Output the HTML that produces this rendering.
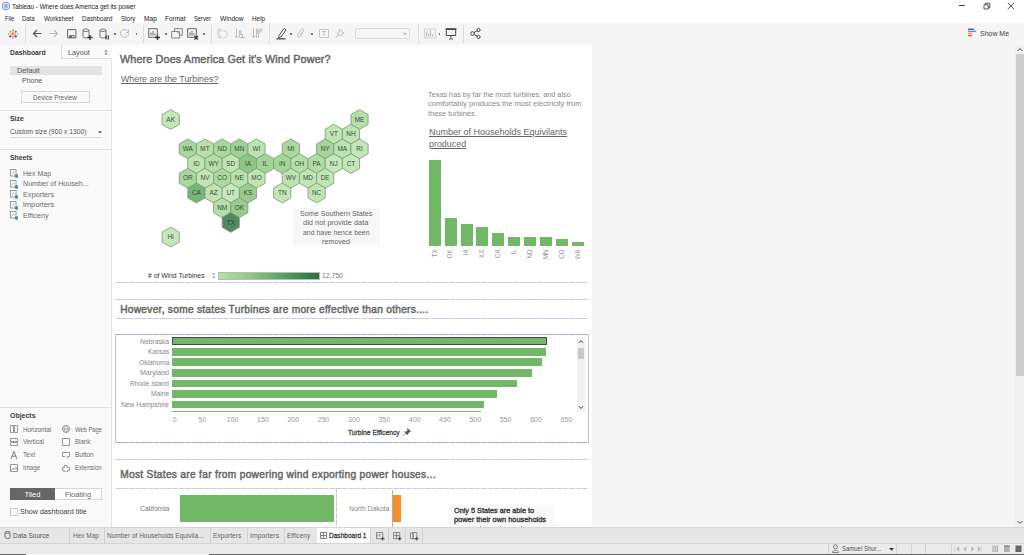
<!DOCTYPE html><html><head><meta charset="utf-8"><style>
*{margin:0;padding:0;box-sizing:border-box}
html,body{width:1024px;height:555px;overflow:hidden;background:#f5f5f5;font-family:"Liberation Sans",sans-serif;color:#333}
.a{position:absolute;white-space:nowrap}
.t{position:absolute;white-space:nowrap;line-height:1}
.dl{position:absolute;height:1px;background-image:linear-gradient(to right,#c0cce0 0,#c0cce0 5px,transparent 5px);background-size:6.3px 1px}
.dv{position:absolute;width:1px;background-image:linear-gradient(to bottom,#c0cce0 0,#c0cce0 5px,transparent 4.6px);background-size:1px 6.35px}
</style></head><body><div class="a" style="left:0px;top:0px;width:1024px;height:23px;background:#fff;"></div>
<svg class="a" style="left:1px;top:1px" width="10" height="10" viewBox="0 0 10 10"><circle cx="5" cy="5" r="3.8" fill="none" stroke="#5b8fd0" stroke-width="0.9"/><path d="M5 2v6M2 5h6M2.9 2.9l4.2 4.2M7.1 2.9l-4.2 4.2" stroke="#5b8fd0" stroke-width="0.7"/></svg>
<div class="t" style="left:12.30px;top:2.80px;font-size:7.5px;color:#222;transform:scaleX(0.840);transform-origin:0 0;">Tableau - Where does America get its power</div>
<div class="t" style="left:4.60px;top:14.80px;font-size:7.5px;color:#222;transform:scaleX(0.753);transform-origin:0 0;">File</div>
<div class="t" style="left:22.40px;top:14.80px;font-size:7.5px;color:#222;transform:scaleX(0.795);transform-origin:0 0;">Data</div>
<div class="t" style="left:43.80px;top:14.80px;font-size:7.5px;color:#222;transform:scaleX(0.826);transform-origin:0 0;">Worksheet</div>
<div class="t" style="left:82.00px;top:14.80px;font-size:7.5px;color:#222;transform:scaleX(0.829);transform-origin:0 0;">Dashboard</div>
<div class="t" style="left:120.90px;top:14.80px;font-size:7.5px;color:#222;transform:scaleX(0.811);transform-origin:0 0;">Story</div>
<div class="t" style="left:143.80px;top:14.80px;font-size:7.5px;color:#222;transform:scaleX(0.884);transform-origin:0 0;">Map</div>
<div class="t" style="left:165.20px;top:14.80px;font-size:7.5px;color:#222;transform:scaleX(0.863);transform-origin:0 0;">Format</div>
<div class="t" style="left:194.10px;top:14.80px;font-size:7.5px;color:#222;transform:scaleX(0.770);transform-origin:0 0;">Server</div>
<div class="t" style="left:219.60px;top:14.80px;font-size:7.5px;color:#222;transform:scaleX(0.881);transform-origin:0 0;">Window</div>
<div class="t" style="left:251.60px;top:14.80px;font-size:7.5px;color:#222;transform:scaleX(0.849);transform-origin:0 0;">Help</div>
<div class="a" style="left:959px;top:5px;width:6px;height:1px;background:#444;"></div>
<svg class="a" style="left:982.5px;top:2px" width="8" height="8" viewBox="0 0 8 8"><path d="M1 2.8h4.2v4.2h-4.2z M2.2 2.8v-1.6h4.6v4.6h-1.6" fill="none" stroke="#444" stroke-width="0.9"/></svg>
<svg class="a" style="left:1007px;top:2px" width="8" height="8" viewBox="0 0 8 8"><path d="M0.8 0.8l6.4 6.4M7.2 0.8l-6.4 6.4" stroke="#444" stroke-width="0.9"/></svg>
<div class="a" style="left:0px;top:23px;width:1024px;height:22px;background:#f5f5f5;"></div>
<div class="a" style="left:0px;top:45px;width:112px;height:482px;background:#fafafa;border-right:1px solid #e4e4e4"></div>
<div class="a" style="left:61px;top:45px;width:51px;height:14px;background:#fafafa;border-left:1px solid #dedede;border-bottom:1px solid #dedede"></div>
<div class="t" style="left:9.70px;top:48.75px;font-size:8px;color:#3a3a3a;font-weight:bold;transform:scaleX(0.854);transform-origin:0 0;">Dashboard</div>
<div class="t" style="left:67.70px;top:48.55px;font-size:8px;color:#555;transform:scaleX(0.908);transform-origin:0 0;">Layout</div>
<svg class="a" style="left:103.5px;top:49px" width="4" height="7" viewBox="0 0 4 7"><path d="M0.5 2.8L2 1L3.5 2.8zM0.5 4.2L2 6L3.5 4.2z" fill="#666"/></svg>
<div class="a" style="left:10px;top:66px;width:92px;height:9px;background:#e3e3e3;"></div>
<div class="t" style="left:16.60px;top:66.50px;font-size:7.5px;color:#555;transform:scaleX(0.955);transform-origin:0 0;">Default</div>
<div class="t" style="left:21.80px;top:76.90px;font-size:7.5px;color:#555;transform:scaleX(0.931);transform-origin:0 0;">Phone</div>
<div class="a" style="left:21px;top:91px;width:69px;height:12px;background:#fafafa;border:1px solid #d6d6d6"></div>
<div class="t" style="left:33.20px;top:93.65px;font-size:7px;color:#666;transform:scaleX(0.910);transform-origin:0 0;">Device Preview</div>
<div class="a" style="left:0px;top:110px;width:111px;height:1px;background:#e2e2e2;"></div>
<div class="t" style="left:9.70px;top:115.15px;font-size:8px;color:#3a3a3a;font-weight:bold;transform:scaleX(0.856);transform-origin:0 0;">Size</div>
<div class="t" style="left:9.70px;top:127.70px;font-size:7.5px;color:#555;transform:scaleX(0.894);transform-origin:0 0;">Custom size (900 x 1300)</div>
<svg class="a" style="left:98px;top:130.5px" width="4" height="3" viewBox="0 0 4 3"><path d="M0 0.3h4L2 2.6z" fill="#555"/></svg>
<div class="a" style="left:10px;top:137px;width:92px;height:1px;background:#dcdcdc;"></div>
<div class="a" style="left:0px;top:149px;width:111px;height:1px;background:#e2e2e2;"></div>
<div class="t" style="left:10.00px;top:154.15px;font-size:8px;color:#3a3a3a;font-weight:bold;transform:scaleX(0.854);transform-origin:0 0;">Sheets</div>
<svg class="a" style="left:10px;top:169.10px" width="8" height="9" viewBox="0 0 8 9"><rect x="0.5" y="0.5" width="5.5" height="6.5" fill="#fff" stroke="#888" stroke-width="0.8"/><path d="M2 5.5l1.5-3 1 2" stroke="#999" stroke-width="0.6" fill="none"/><circle cx="6.6" cy="7" r="1.9" fill="#4a8fb5"/></svg>
<div class="t" style="left:22.70px;top:169.80px;font-size:7.5px;color:#6a6a6a;transform:scaleX(0.936);transform-origin:0 0;">Hex Map</div>
<svg class="a" style="left:10px;top:179.65px" width="8" height="9" viewBox="0 0 8 9"><rect x="0.5" y="0.5" width="5.5" height="6.5" fill="#fff" stroke="#888" stroke-width="0.8"/><path d="M2 5.5l1.5-3 1 2" stroke="#999" stroke-width="0.6" fill="none"/><circle cx="6.6" cy="7" r="1.9" fill="#4a8fb5"/></svg>
<div class="t" style="left:22.70px;top:180.35px;font-size:7.5px;color:#6a6a6a;transform:scaleX(0.949);transform-origin:0 0;">Number of Househ...</div>
<svg class="a" style="left:10px;top:190.20px" width="8" height="9" viewBox="0 0 8 9"><rect x="0.5" y="0.5" width="5.5" height="6.5" fill="#fff" stroke="#888" stroke-width="0.8"/><path d="M2 5.5l1.5-3 1 2" stroke="#999" stroke-width="0.6" fill="none"/><circle cx="6.6" cy="7" r="1.9" fill="#4a8fb5"/></svg>
<div class="t" style="left:22.70px;top:190.90px;font-size:7.5px;color:#6a6a6a;transform:scaleX(0.969);transform-origin:0 0;">Exporters</div>
<svg class="a" style="left:10px;top:200.75px" width="8" height="9" viewBox="0 0 8 9"><rect x="0.5" y="0.5" width="5.5" height="6.5" fill="#fff" stroke="#888" stroke-width="0.8"/><path d="M2 5.5l1.5-3 1 2" stroke="#999" stroke-width="0.6" fill="none"/><circle cx="6.6" cy="7" r="1.9" fill="#4a8fb5"/></svg>
<div class="t" style="left:22.70px;top:201.45px;font-size:7.5px;color:#6a6a6a;">Importers</div>
<svg class="a" style="left:10px;top:211.30px" width="8" height="9" viewBox="0 0 8 9"><rect x="0.5" y="0.5" width="5.5" height="6.5" fill="#fff" stroke="#888" stroke-width="0.8"/><path d="M2 5.5l1.5-3 1 2" stroke="#999" stroke-width="0.6" fill="none"/><circle cx="6.6" cy="7" r="1.9" fill="#4a8fb5"/></svg>
<div class="t" style="left:22.70px;top:212.00px;font-size:7.5px;color:#6a6a6a;transform:scaleX(0.961);transform-origin:0 0;">Efficeny</div>
<div class="a" style="left:0px;top:407px;width:111px;height:1px;background:#e2e2e2;"></div>
<div class="t" style="left:9.60px;top:412.25px;font-size:8px;color:#3a3a3a;font-weight:bold;transform:scaleX(0.869);transform-origin:0 0;">Objects</div>
<svg class="a" style="left:10px;top:425.30px" width="8" height="8.5" viewBox="0 0 8 8.5"><path d="M0.5 0.5h3v7h-3zM4.5 0.5h3v7h-3z" fill="none" stroke="#808080" stroke-width="0.8"/></svg>
<div class="t" style="left:22.70px;top:425.50px;font-size:7.5px;color:#6a6a6a;transform:scaleX(0.832);transform-origin:0 0;">Horizontal</div>
<svg class="a" style="left:62px;top:425.30px" width="8" height="8.5" viewBox="0 0 8 8.5"><circle cx="4" cy="4" r="3.5" fill="none" stroke="#808080" stroke-width="0.8"/><path d="M0.5 4h7M4 0.5c-2 2-2 5 0 7M4 0.5c2 2 2 5 0 7" fill="none" stroke="#808080" stroke-width="0.6"/></svg>
<div class="t" style="left:75.00px;top:425.50px;font-size:7.5px;color:#6a6a6a;transform:scaleX(0.771);transform-origin:0 0;">Web Page</div>
<svg class="a" style="left:10px;top:438.20px" width="8" height="8.5" viewBox="0 0 8 8.5"><path d="M0.5 0.5h7v3h-7zM0.5 4.5h7v3h-7z" fill="none" stroke="#808080" stroke-width="0.8"/></svg>
<div class="t" style="left:22.70px;top:438.40px;font-size:7.5px;color:#6a6a6a;transform:scaleX(0.850);transform-origin:0 0;">Vertical</div>
<svg class="a" style="left:62px;top:438.20px" width="8" height="8.5" viewBox="0 0 8 8.5"><path d="M0.5 0.5h7v7h-7z" fill="none" stroke="#808080" stroke-width="0.8"/></svg>
<div class="t" style="left:75.00px;top:438.40px;font-size:7.5px;color:#6a6a6a;transform:scaleX(0.810);transform-origin:0 0;">Blank</div>
<svg class="a" style="left:10px;top:451.00px" width="8" height="8.5" viewBox="0 0 8 8.5"><path d="M1 8L4 0.5L7 8M2.2 5.2h3.6" fill="none" stroke="#707070" stroke-width="0.9"/></svg>
<div class="t" style="left:22.70px;top:451.20px;font-size:7.5px;color:#6a6a6a;transform:scaleX(0.872);transform-origin:0 0;">Text</div>
<svg class="a" style="left:62px;top:451.00px" width="8" height="8.5" viewBox="0 0 8 8.5"><path d="M0.5 1.5h7v4h-2M3 5.5h-2.5v-4" fill="none" stroke="#808080" stroke-width="0.8"/><path d="M4 4l2.5 3.5l-1 -0.2z" fill="#707070"/></svg>
<div class="t" style="left:75.00px;top:451.20px;font-size:7.5px;color:#6a6a6a;transform:scaleX(0.862);transform-origin:0 0;">Button</div>
<svg class="a" style="left:10px;top:463.60px" width="8" height="8.5" viewBox="0 0 8 8.5"><path d="M0.5 0.5h7v7h-7z M1 6.5l2-2.5 1.5 1.5 1.5-2 1.5 3" fill="none" stroke="#808080" stroke-width="0.8"/></svg>
<div class="t" style="left:22.70px;top:463.80px;font-size:7.5px;color:#6a6a6a;transform:scaleX(0.820);transform-origin:0 0;">Image</div>
<svg class="a" style="left:62px;top:463.60px" width="8" height="8.5" viewBox="0 0 8 8.5"><path d="M2 1.5h3v2h2.5v3h-2v1.5h-3.5v-2h-1.5v-2.5h2z" fill="none" stroke="#808080" stroke-width="0.8"/></svg>
<div class="t" style="left:75.00px;top:463.80px;font-size:7.5px;color:#6a6a6a;transform:scaleX(0.811);transform-origin:0 0;">Extension</div>
<div class="a" style="left:10px;top:488px;width:92px;height:12px;background:#fff;border:1px solid #d6d6d6"></div>
<div class="a" style="left:10px;top:488px;width:45px;height:12px;background:#666;"></div>
<div class="t" style="left:24.40px;top:490.70px;font-size:7.5px;color:#fff;">Tiled</div>
<div class="t" style="left:65.30px;top:490.70px;font-size:7.5px;color:#666;transform:scaleX(0.974);transform-origin:0 0;">Floating</div>
<div class="a" style="left:10px;top:508px;width:8px;height:8px;background:#fff;border:1px solid #ccc"></div>
<div class="t" style="left:20.40px;top:508.20px;font-size:7.5px;color:#444;transform:scaleX(0.954);transform-origin:0 0;">Show dashboard title</div>
<div class="a" style="left:112px;top:45px;width:480px;height:482px;background:#fff;"></div>
<svg class="a" style="left:968px;top:28px" width="9" height="10" viewBox="0 0 9 10"><rect x="0" y="0.5" width="6" height="1.5" fill="#7a5da0"/><rect x="0" y="2.6" width="8" height="1.5" fill="#5e9bd6"/><rect x="0" y="4.7" width="4" height="1.5" fill="#f0a050"/><rect x="0" y="6.8" width="4" height="1.5" fill="#e05a6a"/></svg>
<div class="t" style="left:979.90px;top:30.25px;font-size:8px;color:#444;transform:scaleX(0.870);transform-origin:0 0;">Show Me</div>
<div class="a" style="left:1015px;top:45px;width:9px;height:482px;background:#f0f0f0;"></div>
<div class="a" style="left:1016px;top:54px;width:8px;height:322px;background:#cdcdcd;"></div>
<svg class="a" style="left:1016px;top:47px" width="8" height="6" viewBox="0 0 8 6"><path d="M1.5 4L4 1.5L6.5 4" fill="none" stroke="#444" stroke-width="1"/></svg>
<svg class="a" style="left:1016px;top:519px" width="8" height="6" viewBox="0 0 8 6"><path d="M1.5 2L4 4.5L6.5 2" fill="none" stroke="#444" stroke-width="1"/></svg>
<div class="a" style="left:0px;top:527px;width:1024px;height:16px;background:#e6e6e6;border-top:1px solid #d8d8d8"></div>
<div class="a" style="left:0px;top:543px;width:1024px;height:11px;background:#ebebeb;border-top:1px solid #d5d5d5"></div>
<div class="a" style="left:0px;top:554px;width:26px;height:1px;background:#666;"></div>
<div class="a" style="left:209px;top:554px;width:815px;height:1px;background:#666;"></div>
<svg class="a" style="left:0;top:0" width="1024" height="555" viewBox="0 0 1024 555"><polygon points="170.65,109.59 162.06,114.54 162.06,124.46 170.65,129.41 179.24,124.46 179.24,114.54" fill="#c3e7b8" stroke="#84997f" stroke-width="0.85"/><polygon points="359.52,109.59 350.94,114.54 350.94,124.46 359.52,129.41 368.10,124.46 368.10,114.54" fill="#b5e0a8" stroke="#84997f" stroke-width="0.85"/><polygon points="333.76,124.29 325.18,129.24 325.18,139.16 333.76,144.11 342.35,139.16 342.35,129.24" fill="#c0e5b4" stroke="#84997f" stroke-width="0.85"/><polygon points="350.94,124.29 342.35,129.24 342.35,139.16 350.94,144.11 359.52,139.16 359.52,129.24" fill="#bde4b1" stroke="#84997f" stroke-width="0.85"/><polygon points="187.82,138.99 179.23,143.94 179.23,153.86 187.82,158.81 196.41,153.86 196.41,143.94" fill="#a6d89a" stroke="#84997f" stroke-width="0.85"/><polygon points="204.99,138.99 196.41,143.94 196.41,153.86 204.99,158.81 213.58,153.86 213.58,143.94" fill="#b5e0a8" stroke="#84997f" stroke-width="0.85"/><polygon points="222.16,138.99 213.58,143.94 213.58,153.86 222.16,158.81 230.75,153.86 230.75,143.94" fill="#a8d99b" stroke="#84997f" stroke-width="0.85"/><polygon points="239.33,138.99 230.75,143.94 230.75,153.86 239.33,158.81 247.92,153.86 247.92,143.94" fill="#9dd391" stroke="#84997f" stroke-width="0.85"/><polygon points="256.50,138.99 247.91,143.94 247.91,153.86 256.50,158.81 265.08,153.86 265.08,143.94" fill="#bce4b0" stroke="#84997f" stroke-width="0.85"/><polygon points="290.84,138.99 282.26,143.94 282.26,153.86 290.84,158.81 299.43,153.86 299.43,143.94" fill="#a9d99c" stroke="#84997f" stroke-width="0.85"/><polygon points="325.18,138.99 316.60,143.94 316.60,153.86 325.18,158.81 333.77,153.86 333.77,143.94" fill="#a2d596" stroke="#84997f" stroke-width="0.85"/><polygon points="342.35,138.99 333.77,143.94 333.77,153.86 342.35,158.81 350.94,153.86 350.94,143.94" fill="#bbe3af" stroke="#84997f" stroke-width="0.85"/><polygon points="359.52,138.99 350.94,143.94 350.94,153.86 359.52,158.81 368.10,153.86 368.10,143.94" fill="#c3e7b8" stroke="#84997f" stroke-width="0.85"/><polygon points="196.41,153.69 187.82,158.64 187.82,168.56 196.41,173.51 204.99,168.56 204.99,158.64" fill="#bde4b1" stroke="#84997f" stroke-width="0.85"/><polygon points="213.58,153.69 204.99,158.64 204.99,168.56 213.58,173.51 222.16,168.56 222.16,158.64" fill="#b3dfa6" stroke="#84997f" stroke-width="0.85"/><polygon points="230.75,153.69 222.16,158.64 222.16,168.56 230.75,173.51 239.33,168.56 239.33,158.64" fill="#bde4b1" stroke="#84997f" stroke-width="0.85"/><polygon points="247.92,153.69 239.33,158.64 239.33,168.56 247.92,173.51 256.50,168.56 256.50,158.64" fill="#8cc882" stroke="#84997f" stroke-width="0.85"/><polygon points="265.09,153.69 256.50,158.64 256.50,168.56 265.09,173.51 273.67,168.56 273.67,158.64" fill="#a0d594" stroke="#84997f" stroke-width="0.85"/><polygon points="282.25,153.69 273.67,158.64 273.67,168.56 282.25,173.51 290.84,168.56 290.84,158.64" fill="#a3d697" stroke="#84997f" stroke-width="0.85"/><polygon points="299.43,153.69 290.84,158.64 290.84,168.56 299.43,173.51 308.01,168.56 308.01,158.64" fill="#b5e0a8" stroke="#84997f" stroke-width="0.85"/><polygon points="316.60,153.69 308.01,158.64 308.01,168.56 316.60,173.51 325.18,168.56 325.18,158.64" fill="#b0dda3" stroke="#84997f" stroke-width="0.85"/><polygon points="333.76,153.69 325.18,158.64 325.18,168.56 333.76,173.51 342.35,168.56 342.35,158.64" fill="#c3e7b8" stroke="#84997f" stroke-width="0.85"/><polygon points="350.94,153.69 342.35,158.64 342.35,168.56 350.94,173.51 359.52,168.56 359.52,158.64" fill="#c3e7b8" stroke="#84997f" stroke-width="0.85"/><polygon points="187.82,168.39 179.23,173.34 179.23,183.26 187.82,188.21 196.41,183.26 196.41,173.34" fill="#a6d89a" stroke="#84997f" stroke-width="0.85"/><polygon points="204.99,168.39 196.41,173.34 196.41,183.26 204.99,188.21 213.58,183.26 213.58,173.34" fill="#c1e6b5" stroke="#84997f" stroke-width="0.85"/><polygon points="222.16,168.39 213.58,173.34 213.58,183.26 222.16,188.21 230.75,183.26 230.75,173.34" fill="#a9d99c" stroke="#84997f" stroke-width="0.85"/><polygon points="239.33,168.39 230.75,173.34 230.75,183.26 239.33,188.21 247.92,183.26 247.92,173.34" fill="#b8e2ac" stroke="#84997f" stroke-width="0.85"/><polygon points="256.50,168.39 247.91,173.34 247.91,183.26 256.50,188.21 265.08,183.26 265.08,173.34" fill="#c0e5b4" stroke="#84997f" stroke-width="0.85"/><polygon points="290.84,168.39 282.26,173.34 282.26,183.26 290.84,188.21 299.43,183.26 299.43,173.34" fill="#bce4b0" stroke="#84997f" stroke-width="0.85"/><polygon points="308.01,168.39 299.43,173.34 299.43,183.26 308.01,188.21 316.59,183.26 316.59,173.34" fill="#c1e6b5" stroke="#84997f" stroke-width="0.85"/><polygon points="325.18,168.39 316.60,173.34 316.60,183.26 325.18,188.21 333.77,183.26 333.77,173.34" fill="#c1e6b5" stroke="#84997f" stroke-width="0.85"/><polygon points="196.41,183.09 187.82,188.04 187.82,197.96 196.41,202.91 204.99,197.96 204.99,188.04" fill="#77b47a" stroke="#84997f" stroke-width="0.85"/><polygon points="213.58,183.09 204.99,188.04 204.99,197.96 213.58,202.91 222.16,197.96 222.16,188.04" fill="#bfe3b0" stroke="#84997f" stroke-width="0.85"/><polygon points="230.75,183.09 222.16,188.04 222.16,197.96 230.75,202.91 239.33,197.96 239.33,188.04" fill="#c6e9bb" stroke="#84997f" stroke-width="0.85"/><polygon points="247.92,183.09 239.33,188.04 239.33,197.96 247.92,202.91 256.50,197.96 256.50,188.04" fill="#98cc8c" stroke="#84997f" stroke-width="0.85"/><polygon points="282.25,183.09 273.67,188.04 273.67,197.96 282.25,202.91 290.84,197.96 290.84,188.04" fill="#c3e7b8" stroke="#84997f" stroke-width="0.85"/><polygon points="316.60,183.09 308.01,188.04 308.01,197.96 316.60,202.91 325.18,197.96 325.18,188.04" fill="#c0e5b4" stroke="#84997f" stroke-width="0.85"/><polygon points="222.16,197.79 213.58,202.74 213.58,212.66 222.16,217.61 230.75,212.66 230.75,202.74" fill="#b5e0a8" stroke="#84997f" stroke-width="0.85"/><polygon points="239.33,197.79 230.75,202.74 230.75,212.66 239.33,217.61 247.92,212.66 247.92,202.74" fill="#98cc8c" stroke="#84997f" stroke-width="0.85"/><polygon points="230.75,212.49 222.16,217.44 222.16,227.36 230.75,232.31 239.33,227.36 239.33,217.44" fill="#518a62" stroke="#84997f" stroke-width="0.85"/><polygon points="170.65,227.19 162.06,232.14 162.06,242.06 170.65,247.01 179.24,242.06 179.24,232.14" fill="#c6e8bb" stroke="#84997f" stroke-width="0.85"/><text x="170.65" y="121.60" font-size="7.3" text-anchor="middle" fill="#3d4a3c" font-family="Liberation Sans" textLength="8.57" lengthAdjust="spacingAndGlyphs">AK</text><text x="359.52" y="121.60" font-size="7.3" text-anchor="middle" fill="#3d4a3c" font-family="Liberation Sans" textLength="9.64" lengthAdjust="spacingAndGlyphs">ME</text><text x="333.76" y="136.30" font-size="7.3" text-anchor="middle" fill="#3d4a3c" font-family="Liberation Sans" textLength="8.21" lengthAdjust="spacingAndGlyphs">VT</text><text x="350.94" y="136.30" font-size="7.3" text-anchor="middle" fill="#3d4a3c" font-family="Liberation Sans" textLength="9.28" lengthAdjust="spacingAndGlyphs">NH</text><text x="187.82" y="151.00" font-size="7.3" text-anchor="middle" fill="#3d4a3c" font-family="Liberation Sans" textLength="10.11" lengthAdjust="spacingAndGlyphs">WA</text><text x="204.99" y="151.00" font-size="7.3" text-anchor="middle" fill="#3d4a3c" font-family="Liberation Sans" textLength="9.28" lengthAdjust="spacingAndGlyphs">MT</text><text x="222.16" y="151.00" font-size="7.3" text-anchor="middle" fill="#3d4a3c" font-family="Liberation Sans" textLength="9.28" lengthAdjust="spacingAndGlyphs">ND</text><text x="239.33" y="151.00" font-size="7.3" text-anchor="middle" fill="#3d4a3c" font-family="Liberation Sans" textLength="9.99" lengthAdjust="spacingAndGlyphs">MN</text><text x="256.50" y="151.00" font-size="7.3" text-anchor="middle" fill="#3d4a3c" font-family="Liberation Sans" textLength="7.85" lengthAdjust="spacingAndGlyphs">WI</text><text x="290.84" y="151.00" font-size="7.3" text-anchor="middle" fill="#3d4a3c" font-family="Liberation Sans" textLength="7.14" lengthAdjust="spacingAndGlyphs">MI</text><text x="325.18" y="151.00" font-size="7.3" text-anchor="middle" fill="#3d4a3c" font-family="Liberation Sans" textLength="8.92" lengthAdjust="spacingAndGlyphs">NY</text><text x="342.35" y="151.00" font-size="7.3" text-anchor="middle" fill="#3d4a3c" font-family="Liberation Sans" textLength="9.64" lengthAdjust="spacingAndGlyphs">MA</text><text x="359.52" y="151.00" font-size="7.3" text-anchor="middle" fill="#3d4a3c" font-family="Liberation Sans" textLength="6.42" lengthAdjust="spacingAndGlyphs">RI</text><text x="196.41" y="165.70" font-size="7.3" text-anchor="middle" fill="#3d4a3c" font-family="Liberation Sans" textLength="6.42" lengthAdjust="spacingAndGlyphs">ID</text><text x="213.58" y="165.70" font-size="7.3" text-anchor="middle" fill="#3d4a3c" font-family="Liberation Sans" textLength="10.35" lengthAdjust="spacingAndGlyphs">WY</text><text x="230.75" y="165.70" font-size="7.3" text-anchor="middle" fill="#3d4a3c" font-family="Liberation Sans" textLength="8.92" lengthAdjust="spacingAndGlyphs">SD</text><text x="247.92" y="165.70" font-size="7.3" text-anchor="middle" fill="#3d4a3c" font-family="Liberation Sans" textLength="6.07" lengthAdjust="spacingAndGlyphs">IA</text><text x="265.09" y="165.70" font-size="7.3" text-anchor="middle" fill="#3d4a3c" font-family="Liberation Sans" textLength="5.36" lengthAdjust="spacingAndGlyphs">IL</text><text x="282.25" y="165.70" font-size="7.3" text-anchor="middle" fill="#3d4a3c" font-family="Liberation Sans" textLength="6.42" lengthAdjust="spacingAndGlyphs">IN</text><text x="299.43" y="165.70" font-size="7.3" text-anchor="middle" fill="#3d4a3c" font-family="Liberation Sans" textLength="9.64" lengthAdjust="spacingAndGlyphs">OH</text><text x="316.60" y="165.70" font-size="7.3" text-anchor="middle" fill="#3d4a3c" font-family="Liberation Sans" textLength="8.09" lengthAdjust="spacingAndGlyphs">PA</text><text x="333.76" y="165.70" font-size="7.3" text-anchor="middle" fill="#3d4a3c" font-family="Liberation Sans" textLength="7.85" lengthAdjust="spacingAndGlyphs">NJ</text><text x="350.94" y="165.70" font-size="7.3" text-anchor="middle" fill="#3d4a3c" font-family="Liberation Sans" textLength="8.56" lengthAdjust="spacingAndGlyphs">CT</text><text x="187.82" y="180.40" font-size="7.3" text-anchor="middle" fill="#3d4a3c" font-family="Liberation Sans" textLength="9.64" lengthAdjust="spacingAndGlyphs">OR</text><text x="204.99" y="180.40" font-size="7.3" text-anchor="middle" fill="#3d4a3c" font-family="Liberation Sans" textLength="8.92" lengthAdjust="spacingAndGlyphs">NV</text><text x="222.16" y="180.40" font-size="7.3" text-anchor="middle" fill="#3d4a3c" font-family="Liberation Sans" textLength="9.64" lengthAdjust="spacingAndGlyphs">CO</text><text x="239.33" y="180.40" font-size="7.3" text-anchor="middle" fill="#3d4a3c" font-family="Liberation Sans" textLength="8.92" lengthAdjust="spacingAndGlyphs">NE</text><text x="256.50" y="180.40" font-size="7.3" text-anchor="middle" fill="#3d4a3c" font-family="Liberation Sans" textLength="10.35" lengthAdjust="spacingAndGlyphs">MO</text><text x="290.84" y="180.40" font-size="7.3" text-anchor="middle" fill="#3d4a3c" font-family="Liberation Sans" textLength="10.35" lengthAdjust="spacingAndGlyphs">WV</text><text x="308.01" y="180.40" font-size="7.3" text-anchor="middle" fill="#3d4a3c" font-family="Liberation Sans" textLength="9.99" lengthAdjust="spacingAndGlyphs">MD</text><text x="325.18" y="180.40" font-size="7.3" text-anchor="middle" fill="#3d4a3c" font-family="Liberation Sans" textLength="8.92" lengthAdjust="spacingAndGlyphs">DE</text><text x="196.41" y="195.10" font-size="7.3" text-anchor="middle" fill="#3d4a3c" font-family="Liberation Sans" textLength="8.92" lengthAdjust="spacingAndGlyphs">CA</text><text x="213.58" y="195.10" font-size="7.3" text-anchor="middle" fill="#3d4a3c" font-family="Liberation Sans" textLength="8.21" lengthAdjust="spacingAndGlyphs">AZ</text><text x="230.75" y="195.10" font-size="7.3" text-anchor="middle" fill="#3d4a3c" font-family="Liberation Sans" textLength="8.56" lengthAdjust="spacingAndGlyphs">UT</text><text x="247.92" y="195.10" font-size="7.3" text-anchor="middle" fill="#3d4a3c" font-family="Liberation Sans" textLength="8.57" lengthAdjust="spacingAndGlyphs">KS</text><text x="282.25" y="195.10" font-size="7.3" text-anchor="middle" fill="#3d4a3c" font-family="Liberation Sans" textLength="8.56" lengthAdjust="spacingAndGlyphs">TN</text><text x="316.60" y="195.10" font-size="7.3" text-anchor="middle" fill="#3d4a3c" font-family="Liberation Sans" textLength="9.28" lengthAdjust="spacingAndGlyphs">NC</text><text x="222.16" y="209.80" font-size="7.3" text-anchor="middle" fill="#3d4a3c" font-family="Liberation Sans" textLength="9.99" lengthAdjust="spacingAndGlyphs">NM</text><text x="239.33" y="209.80" font-size="7.3" text-anchor="middle" fill="#3d4a3c" font-family="Liberation Sans" textLength="9.28" lengthAdjust="spacingAndGlyphs">OK</text><text x="230.75" y="224.50" font-size="7.3" text-anchor="middle" fill="#2b3a2b" font-family="Liberation Sans" textLength="8.21" lengthAdjust="spacingAndGlyphs">TX</text><text x="170.65" y="239.20" font-size="7.3" text-anchor="middle" fill="#3d4a3c" font-family="Liberation Sans" textLength="6.42" lengthAdjust="spacingAndGlyphs">HI</text></svg>
<div class="a" style="left:25.4px;top:25px;width:1px;height:18px;background:#dcdcdc;"></div>
<div class="a" style="left:143.4px;top:25px;width:1px;height:18px;background:#dcdcdc;"></div>
<div class="a" style="left:211px;top:25px;width:1px;height:18px;background:#dcdcdc;"></div>
<div class="a" style="left:269.4px;top:25px;width:1px;height:18px;background:#dcdcdc;"></div>
<div class="a" style="left:418px;top:25px;width:1px;height:18px;background:#dcdcdc;"></div>
<div class="a" style="left:463.4px;top:25px;width:1px;height:18px;background:#dcdcdc;"></div>
<svg class="a" style="left:7.5px;top:28.6px" width="10" height="10" viewBox="0 0 13 13"><g stroke-width="1.3"><path d="M6.5 3v7M3 6.5h7" stroke="#e8762b"/><path d="M3 2v3M1.5 3.5h3" stroke="#f5a623"/><path d="M10 2v3M8.5 3.5h3" stroke="#59879b"/><path d="M3 8v3M1.5 9.5h3" stroke="#c72037"/><path d="M10 8v3M8.5 9.5h3" stroke="#1f457e"/><path d="M6.5 0.5v2M5.5 1.5h2M6.5 10.5v2M5.5 11.5h2M0.5 5.5v2M12.5 5.5v2" stroke="#7099a6"/></g></svg>
<svg class="a" style="left:32px;top:29px" width="10" height="9" viewBox="0 0 10 9"><path d="M9.5 4.5H1.5M5 1L1.5 4.5L5 8" fill="none" stroke="#555" stroke-width="1.2"/></svg>
<svg class="a" style="left:49px;top:29px" width="10" height="9" viewBox="0 0 10 9"><path d="M0.5 4.5H8.5M5 1L8.5 4.5L5 8" fill="none" stroke="#bbb" stroke-width="1.1"/></svg>
<svg class="a" style="left:67px;top:29.3px" width="9.5" height="9.5" viewBox="0 0 9.5 9.5"><path d="M0.6 0.6h8.3v8.3h-8.3z" fill="none" stroke="#666" stroke-width="1"/><path d="M2 6.2h5.5v2.7h-5.5z" fill="#666"/><rect x="5" y="7" width="1.4" height="1.4" fill="#ddd"/></svg>
<svg class="a" style="left:82px;top:28px" width="11" height="12" viewBox="0 0 11 12"><path d="M1 2.5c0-2 6-2 6 0v6.5c0 1.2-6 1.2-6 0z M1 2.5c0 1.2 6 1.2 6 0" fill="none" stroke="#666" stroke-width="0.9"/><path d="M8 7v5M5.5 9.5h5" stroke="#333" stroke-width="1.3"/></svg>
<svg class="a" style="left:99px;top:28px" width="11" height="12" viewBox="0 0 11 12"><path d="M1 2.5c0-2 6-2 6 0v6.5c0 1.2-6 1.2-6 0z M1 2.5c0 1.2 6 1.2 6 0" fill="none" stroke="#666" stroke-width="0.9"/><path d="M7 7.5v4M9.3 7.5v4" stroke="#333" stroke-width="1.2"/></svg>
<div class="a" style="left:114.25px;top:33.2px;width:1.5px;height:1.5px;background:#777;"></div>
<div class="a" style="left:135.75px;top:33.2px;width:1.5px;height:1.5px;background:#777;"></div>
<div class="a" style="left:165.05px;top:33.2px;width:1.5px;height:1.5px;background:#777;"></div>
<div class="a" style="left:203.25px;top:33.2px;width:1.5px;height:1.5px;background:#777;"></div>
<div class="a" style="left:290.05px;top:33.2px;width:1.5px;height:1.5px;background:#777;"></div>
<div class="a" style="left:311.25px;top:33.2px;width:1.5px;height:1.5px;background:#777;"></div>
<div class="a" style="left:438.65px;top:33.2px;width:1.5px;height:1.5px;background:#777;"></div>
<svg class="a" style="left:120px;top:29px" width="10" height="10" viewBox="0 0 10 10"><path d="M8.5 4.5a4 4 0 1 1-1.2-2.9M8.5 0.8v2.6h-2.6" fill="none" stroke="#bbb" stroke-width="1"/></svg>
<svg class="a" style="left:148px;top:28px" width="13" height="12" viewBox="0 0 13 12"><path d="M0.7 0.7h8.6v8.6h-8.6z" fill="none" stroke="#666" stroke-width="1"/><path d="M3 7.5v-3M5 7.5v-4.5M7 7.5v-2" stroke="#666" stroke-width="1"/><path d="M9.5 7v5M7 9.5h5" stroke="#333" stroke-width="1.4"/></svg>
<svg class="a" style="left:171px;top:28px" width="12" height="11" viewBox="0 0 12 11"><path d="M3.5 0.7h7.8v6.5h-7.8z" fill="#f5f5f5" stroke="#777" stroke-width="0.9"/><path d="M0.7 3.5h7.8v6.5h-7.8z" fill="#f5f5f5" stroke="#777" stroke-width="0.9"/><path d="M6.5 5.5l1-1.5 1 1.5" stroke="#777" fill="none" stroke-width="0.7"/></svg>
<svg class="a" style="left:187px;top:28px" width="12" height="12" viewBox="0 0 12 12"><path d="M0.7 0.7h8.6v8.6h-8.6z" fill="none" stroke="#666" stroke-width="1"/><path d="M3 7.5v-3M5 7.5v-4.5M7 7.5v-2" stroke="#666" stroke-width="1"/><path d="M7.5 8l3.5 3.5M11 8l-3.5 3.5" stroke="#333" stroke-width="1.3"/></svg>
<svg class="a" style="left:217px;top:28px" width="11" height="11" viewBox="0 0 11 11"><path d="M1 1h3v2h-2v5h2v2h-3z M6 3h2.5l1.5 2v3l-1.5 2h-2.5" fill="none" stroke="#ccc" stroke-width="0.9"/></svg>
<svg class="a" style="left:234px;top:28px" width="12" height="11" viewBox="0 0 12 11"><path d="M2.5 0.5v9M0.7 7.5l1.8 2.2 1.8-2.2" fill="none" stroke="#bbb" stroke-width="0.9"/><path d="M5.5 9.5h5.5M5.5 9.5v-3h3v3M5.5 6.5v-4h1.5v4" fill="none" stroke="#bbb" stroke-width="0.9"/></svg>
<svg class="a" style="left:251px;top:28px" width="12" height="11" viewBox="0 0 12 11"><path d="M2.5 0.5v9M0.7 7.5l1.8 2.2 1.8-2.2" fill="none" stroke="#bbb" stroke-width="0.9"/><path d="M5.5 1h5.5v2h-5.5zM5.5 3h3.5v2h-3.5zM5.5 5h2v4h-2z" fill="none" stroke="#bbb" stroke-width="0.9"/></svg>
<svg class="a" style="left:276px;top:27px" width="11" height="13" viewBox="0 0 11 13"><path d="M3 8.5l5-7 2 1.5-5 7-2.5 0.5z" fill="none" stroke="#555" stroke-width="1"/><path d="M0.5 11.8h9" stroke="#555" stroke-width="1.4"/></svg>
<svg class="a" style="left:297px;top:28px" width="9" height="11" viewBox="0 0 9 11"><path d="M6.5 3.5l-3.5 5a1.5 1.5 0 0 1-2.4-1.8l4-5.5a1.2 1.2 0 0 1 2 1.4l-3.5 4.8" fill="none" stroke="#bbb" stroke-width="0.9"/></svg>
<svg class="a" style="left:319px;top:29px" width="10" height="9" viewBox="0 0 10 9"><path d="M0.5 0.5h9v8h-9z" fill="none" stroke="#bbb" stroke-width="0.8"/><path d="M3 2.5h4M5 2.5v4.5" stroke="#bbb" stroke-width="0.9"/></svg>
<svg class="a" style="left:335px;top:28px" width="10" height="11" viewBox="0 0 10 11"><path d="M4 1l5 4-2 0.8-1.2 2.5-3.8-3 2.5-1.3z M3.2 6.5l-2.5 3.5" fill="none" stroke="#bbb" stroke-width="0.9"/></svg>
<div class="a" style="left:354.5px;top:27.8px;width:55px;height:11.7px;background:#f5f5f5;border:1px solid #dadada;border-radius:1px"></div>
<svg class="a" style="left:403px;top:33px" width="4" height="3" viewBox="0 0 4 3"><path d="M0 0h4L2 2.5z" fill="#bbb"/></svg>
<svg class="a" style="left:424px;top:28px" width="12" height="11" viewBox="0 0 12 11"><path d="M0.5 1h11v9h-11z" fill="none" stroke="#ccc" stroke-width="0.8"/><path d="M2.5 8.5v-5M4.5 8.5v-3M6.5 8.5v-6M8.5 8.5v-2" stroke="#bbb" stroke-width="1.1"/></svg>
<svg class="a" style="left:445px;top:28px" width="12" height="12" viewBox="0 0 12 12"><path d="M0.5 0.8h11" stroke="#444" stroke-width="1.3"/><path d="M1.3 1.5h9.4v6h-9.4z" fill="none" stroke="#444" stroke-width="1"/><path d="M6 7.5v3M4 11.5l2-1 2 1" fill="none" stroke="#444" stroke-width="0.9"/></svg>
<svg class="a" style="left:470px;top:28px" width="11" height="11" viewBox="0 0 11 11"><circle cx="2.5" cy="5.5" r="1.8" fill="none" stroke="#444" stroke-width="1"/><circle cx="8.5" cy="2" r="1.6" fill="none" stroke="#444" stroke-width="1"/><circle cx="8.5" cy="9" r="1.6" fill="none" stroke="#444" stroke-width="1"/><path d="M4 4.6l3-1.8M4 6.4l3 1.8" stroke="#444" stroke-width="1"/></svg>
<div class="t" style="left:120.00px;top:54.46px;font-size:10.8px;color:#666;-webkit-text-stroke:0.45px #666;letter-spacing:0.129px;">Where Does America Get it’s Wind Power?</div>
<div class="t" style="left:120.50px;top:75.10px;font-size:8.5px;color:#666;transform:scaleX(1.040);transform-origin:0 0;text-decoration:underline;">Where are the Turbines?</div>
<div class="a" style="left:293.4px;top:208px;width:86.6px;height:36.7px;background:#f7f7f7;"></div>
<div class="t" style="left:299.65px;top:210.10px;font-size:7.3px;color:#666;transform:scaleX(0.984);transform-origin:0 0;">Some Southern States</div>
<div class="t" style="left:303.05px;top:219.40px;font-size:7.3px;color:#666;transform:scaleX(1.021);transform-origin:0 0;">did not provide data</div>
<div class="t" style="left:302.50px;top:228.70px;font-size:7.3px;color:#666;transform:scaleX(0.948);transform-origin:0 0;">and have hence been</div>
<div class="t" style="left:321.80px;top:238.00px;font-size:7.3px;color:#666;transform:scaleX(0.986);transform-origin:0 0;">removed</div>
<div class="t" style="left:428.30px;top:90.85px;font-size:7.2px;color:#888;transform:scaleX(1.015);transform-origin:0 0;">Texas has by far the most turbines, and also</div>
<div class="t" style="left:428.30px;top:100.45px;font-size:7.2px;color:#888;transform:scaleX(1.047);transform-origin:0 0;">comfortably produces the most electricity from</div>
<div class="t" style="left:428.30px;top:110.05px;font-size:7.2px;color:#888;transform:scaleX(1.033);transform-origin:0 0;">these turbines.</div>
<div class="t" style="left:429.00px;top:127.84px;font-size:9px;color:#666;text-decoration:underline;">Number of Households Equivilants</div>
<div class="t" style="left:429.00px;top:139.84px;font-size:9px;color:#666;transform:scaleX(0.989);transform-origin:0 0;text-decoration:underline;">produced</div>
<div class="a" style="left:428.7px;top:159.7px;width:12px;height:86.3px;background:#72b866;"></div>
<div class="t" style="left:431.50px;top:248.60px;width:8.31px;font-size:6.5px;color:#929292;transform-origin:0 0;transform:translate(0px,8.31px) rotate(-90deg) scaleX(0.95)">TX</div>
<div class="a" style="left:444.6px;top:218.4px;width:12px;height:27.6px;background:#72b866;"></div>
<div class="t" style="left:447.40px;top:248.60px;width:9.39px;font-size:6.5px;color:#929292;transform-origin:0 0;transform:translate(0px,9.39px) rotate(-90deg) scaleX(0.95)">OK</div>
<div class="a" style="left:460.5px;top:223.7px;width:12px;height:22.3px;background:#72b866;"></div>
<div class="t" style="left:463.30px;top:248.60px;width:6.14px;font-size:6.5px;color:#929292;transform-origin:0 0;transform:translate(0px,6.14px) rotate(-90deg) scaleX(0.95)">IA</div>
<div class="a" style="left:476.4px;top:227px;width:12px;height:19px;background:#72b866;"></div>
<div class="t" style="left:479.20px;top:248.60px;width:8.67px;font-size:6.5px;color:#929292;transform-origin:0 0;transform:translate(0px,8.67px) rotate(-90deg) scaleX(0.95)">KS</div>
<div class="a" style="left:492.3px;top:232.8px;width:12px;height:13.2px;background:#72b866;"></div>
<div class="t" style="left:495.10px;top:248.60px;width:9.03px;font-size:6.5px;color:#929292;transform-origin:0 0;transform:translate(0px,9.03px) rotate(-90deg) scaleX(0.95)">CA</div>
<div class="a" style="left:508.2px;top:236.6px;width:12px;height:9.4px;background:#72b866;"></div>
<div class="t" style="left:511.00px;top:248.60px;width:5.42px;font-size:6.5px;color:#929292;transform-origin:0 0;transform:translate(0px,5.42px) rotate(-90deg) scaleX(0.95)">IL</div>
<div class="a" style="left:524.1px;top:237px;width:12px;height:9px;background:#72b866;"></div>
<div class="t" style="left:526.90px;top:248.60px;width:9.39px;font-size:6.5px;color:#929292;transform-origin:0 0;transform:translate(0px,9.39px) rotate(-90deg) scaleX(0.95)">ND</div>
<div class="a" style="left:540.0px;top:237px;width:12px;height:9px;background:#72b866;"></div>
<div class="t" style="left:542.80px;top:248.60px;width:10.11px;font-size:6.5px;color:#929292;transform-origin:0 0;transform:translate(0px,10.11px) rotate(-90deg) scaleX(0.95)">MN</div>
<div class="a" style="left:555.9px;top:239px;width:12px;height:7px;background:#72b866;"></div>
<div class="t" style="left:558.70px;top:248.60px;width:9.75px;font-size:6.5px;color:#929292;transform-origin:0 0;transform:translate(0px,9.75px) rotate(-90deg) scaleX(0.95)">CO</div>
<div class="a" style="left:571.8px;top:241.8px;width:12px;height:4.2px;background:#72b866;"></div>
<div class="t" style="left:574.60px;top:248.60px;width:10.23px;font-size:6.5px;color:#929292;transform-origin:0 0;transform:translate(0px,10.23px) rotate(-90deg) scaleX(0.95)">WA</div>
<div class="t" style="left:147.50px;top:271.70px;font-size:7.5px;color:#333;transform:scaleX(0.904);transform-origin:0 0;"># of Wind Turbines</div>
<div class="t" style="left:211.80px;top:271.70px;font-size:7.5px;color:#777;transform:scaleX(0.767);transform-origin:0 0;">1</div>
<div class="a" style="left:218px;top:271.7px;width:101.6px;height:8.1px;background:linear-gradient(to right,#b7e2a7,#8cc47e 35%,#4b9a5a 70%,#2c6e40);border:1px solid #bbb"></div>
<div class="t" style="left:322.20px;top:271.70px;font-size:7.5px;color:#777;transform:scaleX(0.907);transform-origin:0 0;">12,750</div>
<div class="dl" style="left:116px;top:282px;width:472px"></div>
<div class="dl" style="left:116px;top:299px;width:472px"></div>
<div class="dl" style="left:116px;top:318px;width:472px"></div>
<div class="dl" style="left:116px;top:459px;width:472px"></div>
<div class="dl" style="left:116px;top:488px;width:472px"></div>
<div class="t" style="left:120.20px;top:304.97px;font-size:10.2px;color:#666;-webkit-text-stroke:0.45px #666;letter-spacing:0.264px;">However, some states Turbines are more effective than others....</div>
<div class="t" style="left:120.20px;top:470.47px;font-size:10.2px;color:#666;-webkit-text-stroke:0.45px #666;letter-spacing:0.296px;">Most States are far from powering wind exporting power houses...</div>
<div class="a" style="left:115px;top:334px;width:474px;height:109px;border:1px solid #c4c4c4"></div>
<div class="dl" style="left:116px;top:334px;width:472px;background-image:linear-gradient(to right,#9fb0c8 0,#9fb0c8 5px,#e8e8e8 5px);background-size:6.3px 1px"></div>
<div class="dl" style="left:116px;top:442px;width:472px;background-image:linear-gradient(to right,#9fb0c8 0,#9fb0c8 5px,#e8e8e8 5px);background-size:6.3px 1px"></div>
<div class="a" style="left:171.9px;top:337.3px;width:374.9px;height:7.8px;background:#72b866;border:1px solid #4a4a4a;"></div>
<div class="t" style="left:140.10px;top:337.65px;font-size:7px;color:#888;transform:scaleX(0.968);transform-origin:0 0;">Nebraska</div>
<div class="a" style="left:171.9px;top:347.9px;width:373.9px;height:7.8px;background:#72b866;"></div>
<div class="t" style="left:148.00px;top:348.20px;font-size:7px;color:#888;transform:scaleX(0.904);transform-origin:0 0;">Kansas</div>
<div class="a" style="left:171.9px;top:358.4px;width:370.4px;height:7.8px;background:#72b866;"></div>
<div class="t" style="left:138.70px;top:358.75px;font-size:7px;color:#888;transform:scaleX(0.953);transform-origin:0 0;">Oklahoma</div>
<div class="a" style="left:171.9px;top:368.9px;width:360.5px;height:7.8px;background:#72b866;"></div>
<div class="t" style="left:140.10px;top:369.30px;font-size:7px;color:#888;transform:scaleX(1.007);transform-origin:0 0;">Maryland</div>
<div class="a" style="left:171.9px;top:379.5px;width:344.9px;height:7.8px;background:#72b866;"></div>
<div class="t" style="left:130.30px;top:379.85px;font-size:7px;color:#888;transform:scaleX(0.941);transform-origin:0 0;">Rhode Island</div>
<div class="a" style="left:171.9px;top:390.1px;width:324.8px;height:7.8px;background:#72b866;"></div>
<div class="t" style="left:150.80px;top:390.40px;font-size:7px;color:#888;transform:scaleX(0.960);transform-origin:0 0;">Maine</div>
<div class="a" style="left:171.9px;top:400.6px;width:311.8px;height:7.8px;background:#72b866;"></div>
<div class="t" style="left:121.30px;top:400.95px;font-size:7px;color:#888;transform:scaleX(0.960);transform-origin:0 0;">New Hampshire</div>
<div class="a" style="left:171.9px;top:410.8px;width:309px;height:1.5px;background:#72b866;"></div>
<div class="t" style="left:172.70px;top:416.25px;font-size:7px;color:#999;">0</div>
<div class="t" style="left:198.35px;top:416.25px;font-size:7px;color:#999;">50</div>
<div class="t" style="left:226.74px;top:416.25px;font-size:7px;color:#999;">100</div>
<div class="t" style="left:257.08px;top:416.25px;font-size:7px;color:#999;">150</div>
<div class="t" style="left:287.42px;top:416.25px;font-size:7px;color:#999;">200</div>
<div class="t" style="left:317.76px;top:416.25px;font-size:7px;color:#999;">250</div>
<div class="t" style="left:348.10px;top:416.25px;font-size:7px;color:#999;">300</div>
<div class="t" style="left:378.44px;top:416.25px;font-size:7px;color:#999;">350</div>
<div class="t" style="left:408.78px;top:416.25px;font-size:7px;color:#999;">400</div>
<div class="t" style="left:439.12px;top:416.25px;font-size:7px;color:#999;">450</div>
<div class="t" style="left:469.46px;top:416.25px;font-size:7px;color:#999;">500</div>
<div class="t" style="left:499.80px;top:416.25px;font-size:7px;color:#999;">550</div>
<div class="t" style="left:530.14px;top:416.25px;font-size:7px;color:#999;">600</div>
<div class="t" style="left:560.48px;top:416.25px;font-size:7px;color:#999;">650</div>
<div class="t" style="left:348.10px;top:428.87px;font-size:7.6px;color:#444;transform:scaleX(0.887);transform-origin:0 0;-webkit-text-stroke:0.3px #444;">Turbine Efficency</div>
<svg class="a" style="left:403px;top:428px" width="8" height="8" viewBox="0 0 8 8"><path d="M4.5 0.5l3 3-1.3 0.4-1.5 1.8 0.2 1.3-3.2-3.2 1.3 0.2 1.8-1.5z M2.8 5.2l-2.3 2.3" fill="#555" stroke="#555" stroke-width="0.7"/></svg>
<div class="a" style="left:576.7px;top:337.2px;width:8px;height:74.5px;background:#f0f0f0;"></div>
<div class="a" style="left:577.5px;top:347.7px;width:6.5px;height:11px;background:#c8c8c8;"></div>
<svg class="a" style="left:577.5px;top:339px" width="6" height="5" viewBox="0 0 6 5"><path d="M1 3.8L3 1.5L5 3.8" fill="none" stroke="#444" stroke-width="1"/></svg>
<svg class="a" style="left:577.5px;top:405px" width="6" height="5" viewBox="0 0 6 5"><path d="M1 1.2L3 3.5L5 1.2" fill="none" stroke="#444" stroke-width="1"/></svg>
<div class="t" style="left:139.70px;top:505.05px;font-size:7px;color:#777;transform:scaleX(0.991);transform-origin:0 0;">California</div>
<div class="a" style="left:180px;top:495.1px;width:154.2px;height:26.8px;background:#72b866;"></div>
<div class="dv" style="left:336px;top:488px;height:39px"></div>
<div class="t" style="left:348.80px;top:505.05px;font-size:7px;color:#888;transform:scaleX(0.975);transform-origin:0 0;">North Dakota</div>
<div class="a" style="left:392px;top:490.3px;width:1px;height:36.7px;background:#b0b0b0;"></div>
<div class="a" style="left:392.5px;top:495.3px;width:8.6px;height:26.5px;background:#f28e2b;"></div>
<div class="a" style="left:449.1px;top:504.8px;width:104.6px;height:22.2px;background:#f8f8f8;"></div>
<div class="t" style="left:454.00px;top:506.95px;font-size:8px;color:#404040;transform:scaleX(0.909);transform-origin:0 0;-webkit-text-stroke:0.4px #404040;">Only 5 States are able to</div>
<div class="t" style="left:454.00px;top:515.95px;font-size:8px;color:#404040;transform:scaleX(0.924);transform-origin:0 0;-webkit-text-stroke:0.4px #404040;">power their own households</div>
<div class="a" style="left:480px;top:526px;width:1px;height:1px;background:#999;"></div>
<div class="a" style="left:500px;top:526px;width:1px;height:1px;background:#999;"></div>
<div class="a" style="left:521px;top:526px;width:1px;height:1px;background:#999;"></div>
<div class="a" style="left:69.4px;top:528px;width:1px;height:15px;background:#d2d2d2;"></div>
<div class="a" style="left:103.6px;top:528px;width:1px;height:15px;background:#d2d2d2;"></div>
<div class="a" style="left:210.3px;top:528px;width:1px;height:15px;background:#d2d2d2;"></div>
<div class="a" style="left:247.3px;top:528px;width:1px;height:15px;background:#d2d2d2;"></div>
<div class="a" style="left:284.4px;top:528px;width:1px;height:15px;background:#d2d2d2;"></div>
<div class="a" style="left:316.7px;top:528px;width:1px;height:15px;background:#d2d2d2;"></div>
<div class="a" style="left:370.4px;top:528px;width:1px;height:15px;background:#d2d2d2;"></div>
<div class="a" style="left:387.5px;top:528px;width:1px;height:15px;background:#d2d2d2;"></div>
<div class="a" style="left:405.3px;top:528px;width:1px;height:15px;background:#d2d2d2;"></div>
<div class="a" style="left:422.1px;top:528px;width:1px;height:15px;background:#d2d2d2;"></div>
<div class="a" style="left:317.2px;top:528px;width:53.2px;height:15px;background:#fafafa;"></div>
<svg class="a" style="left:4px;top:531px" width="7" height="8" viewBox="0 0 7 8"><path d="M1 1.5c0-1.3 5-1.3 5 0v5c0 1.3-5 1.3-5 0z M1 1.5c0 1 5 1 5 0" fill="none" stroke="#666" stroke-width="0.9"/></svg>
<div class="t" style="left:12.90px;top:531.70px;font-size:7.5px;color:#555;transform:scaleX(0.866);transform-origin:0 0;">Data Source</div>
<div class="t" style="left:73.00px;top:531.70px;font-size:7.5px;color:#666;transform:scaleX(0.860);transform-origin:0 0;">Hex Map</div>
<div class="t" style="left:106.80px;top:531.70px;font-size:7.5px;color:#666;transform:scaleX(0.867);transform-origin:0 0;">Number of Households Equivila...</div>
<div class="t" style="left:213.40px;top:531.70px;font-size:7.5px;color:#666;transform:scaleX(0.882);transform-origin:0 0;">Exporters</div>
<div class="t" style="left:249.90px;top:531.70px;font-size:7.5px;color:#666;transform:scaleX(0.919);transform-origin:0 0;">Importers</div>
<div class="t" style="left:287.40px;top:531.70px;font-size:7.5px;color:#666;transform:scaleX(0.874);transform-origin:0 0;">Efficeny</div>
<svg class="a" style="left:320px;top:532px" width="7" height="7" viewBox="0 0 7 7"><path d="M0.5 0.5h6v6h-6zM3.5 0.5v6M0.5 3.5h6" fill="none" stroke="#666" stroke-width="0.8"/></svg>
<div class="t" style="left:329.10px;top:531.70px;font-size:7.5px;color:#444;transform:scaleX(0.873);transform-origin:0 0;-webkit-text-stroke:0.3px #444;">Dashboard 1</div>
<svg class="a" style="left:376px;top:532px" width="9" height="9" viewBox="0 0 10 10"><path d="M0.5 0.5h7v7h-7z" fill="none" stroke="#666" stroke-width="0.8"/><path d="M2 5v-2M4 5v-3" stroke="#666" stroke-width="0.8"/><path d="M7.5 5.5v4M5.5 7.5h4" stroke="#444" stroke-width="1.1"/></svg>
<svg class="a" style="left:393px;top:532px" width="9" height="9" viewBox="0 0 10 10"><path d="M0.5 0.5h7v7h-7zM4 0.5v7M0.5 4h7" fill="none" stroke="#666" stroke-width="0.8"/><path d="M7.5 5.5v4M5.5 7.5h4" stroke="#444" stroke-width="1.1"/></svg>
<svg class="a" style="left:410px;top:532px" width="9" height="9" viewBox="0 0 10 10"><path d="M0.5 1h3v6.5h-3zM3.5 0.5h4v7h-4z" fill="none" stroke="#666" stroke-width="0.8"/><path d="M7.5 5.5v4M5.5 7.5h4" stroke="#444" stroke-width="1.1"/></svg>
<div class="a" style="left:828.4px;top:544px;width:1px;height:10px;background:#d2d2d2;"></div>
<div class="a" style="left:896.3px;top:544px;width:1px;height:10px;background:#d2d2d2;"></div>
<div class="a" style="left:910.5px;top:544px;width:1px;height:10px;background:#d2d2d2;"></div>
<div class="a" style="left:925.4px;top:544px;width:1px;height:10px;background:#d2d2d2;"></div>
<div class="a" style="left:950.5px;top:544px;width:1px;height:10px;background:#d2d2d2;"></div>
<svg class="a" style="left:832px;top:544px" width="7" height="9" viewBox="0 0 7 9"><circle cx="3.5" cy="2.8" r="2" fill="none" stroke="#666" stroke-width="0.8"/><path d="M0.5 8.5c0-3 6-3 6 0z" fill="none" stroke="#666" stroke-width="0.8"/></svg>
<div class="t" style="left:842.20px;top:545.20px;font-size:7.5px;color:#555;transform:scaleX(0.797);transform-origin:0 0;">Samuel Shur...</div>
<svg class="a" style="left:888.5px;top:547.5px" width="5" height="3" viewBox="0 0 5 3"><path d="M0 0h5L2.5 2.8z" fill="#333"/></svg>
<svg class="a" style="left:954px;top:545px" width="45" height="8" viewBox="0 0 45 8"><path d="M1 1v6M5 1.5L2.5 4L5 6.5zM12 1.5L9.5 4L12 6.5zM17.5 1.5L20 4L17.5 6.5zM24 1.5L26.5 4L24 6.5zM27 1v6" fill="#bbb" stroke="#bbb" stroke-width="0.5"/></svg>
<svg class="a" style="left:992px;top:545px" width="32" height="8" viewBox="0 0 32 8"><g fill="#aaa"><rect x="0.5" y="0.5" width="1.2" height="6.5"/><rect x="2.6" y="0.5" width="1.2" height="6.5"/><rect x="4.7" y="0.5" width="1.2" height="6.5"/><rect x="12" y="0.5" width="5.6" height="6.5" fill="#b0b0b0"/><rect x="12" y="0.5" width="5.6" height="1.3" fill="#888"/><rect x="23.5" y="0.5" width="6" height="6.5" fill="#666"/></g></svg></body></html>
